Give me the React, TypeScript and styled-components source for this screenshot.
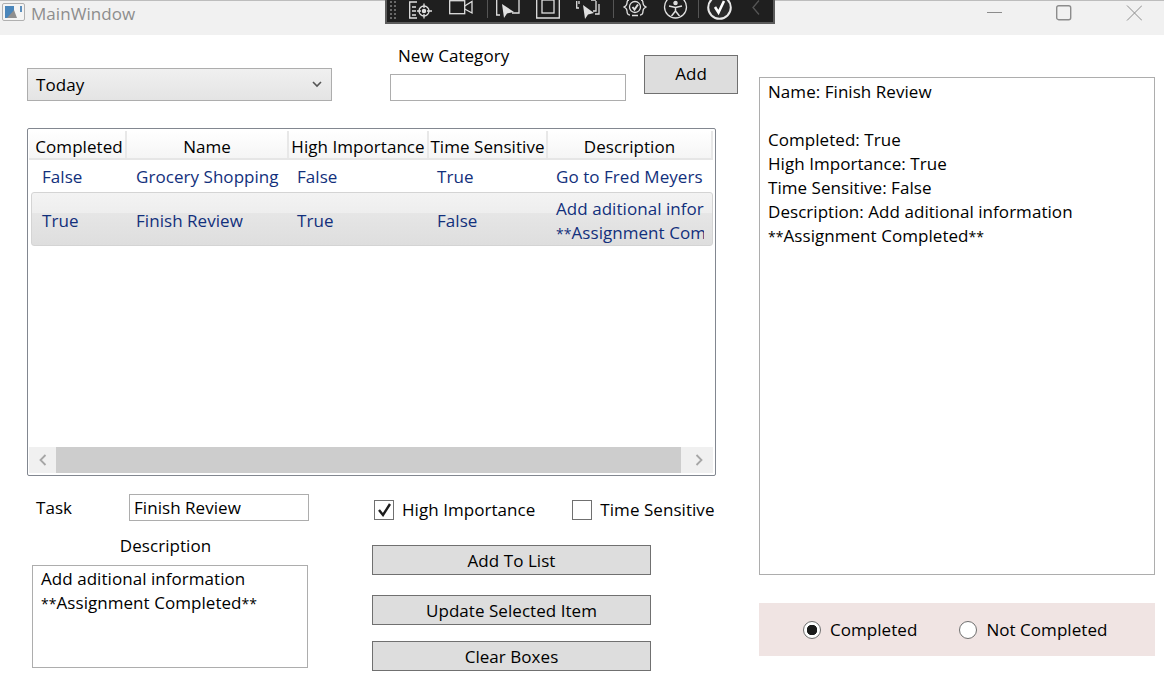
import styled, { createGlobalStyle } from 'styled-components'

const GlobalStyle = createGlobalStyle`
  html, body {
    margin: 0;
    padding: 0;
    background: #ffffff;
  }
  body {
    font-family: "Open Sans", "Noto Sans", "Liberation Sans", sans-serif;
    font-size: 17px;
    letter-spacing: 0.05px;
    color: #000000;
  }
`

const columns = [
  { title: 'Completed', width: 94 },
  { title: 'Name', width: 162 },
  { title: 'High Importance', width: 140 },
  { title: 'Time Sensitive', width: 119 },
  { title: 'Description', width: 165 },
]

const rows = [
  { completed: 'False', name: 'Grocery Shopping', high: 'False', time: 'True', description: ['Go to Fred Meyers'], selected: false },
  { completed: 'True', name: 'Finish Review', high: 'True', time: 'False', description: ['Add aditional information', 'done'], selected: true },
]

// the asterisks are wider in Open Sans than in the original font
const Done = () => (
  <>
    <Stars>**</Stars>Assignment Completed<Stars>**</Stars>
  </>
)

const App = () => {
  return (
    <Window>
      <GlobalStyle />
      <TitleBar>
        <AppIcon viewBox="0 0 23 18">
          <rect x="0.5" y="0.5" width="22" height="17" rx="1.5" fill="#f4f4f4" stroke="#b0b0b0" />
          <rect x="3" y="3" width="9" height="12" fill="#4a86bb" />
          <path d="M5 15 L12 7 L15 15 Z" fill="#8f8f8f" />
          <rect x="18" y="3" width="2" height="6" fill="#5c8fbd" />
        </AppIcon>
        <WindowTitle>MainWindow</WindowTitle>
        <DebugBar>
          <Grip />
          <ToolIcon $left={12} width="24" height="20" viewBox="0 0 24 20">
            <path d="M8 2 H0.7 V18 H8 M3 7 H7 M3 11 H7 M3 15 H7" />
            <circle cx="15" cy="11" r="5" />
            <circle cx="15" cy="11" r="1.6" fill="#e0e0e0" />
            <path d="M15 3.5 V8 M15 14 V18.5 M8 11 H12 M18 11 H23" />
          </ToolIcon>
          <ToolIcon $left={16} width="24" height="20" viewBox="0 0 24 20">
            <rect x="0.7" y="0.7" width="15" height="13" />
            <path d="M15.7 6 L23 1.5 V13 L15.7 9" />
          </ToolIcon>
          <Divider $left={14} />
          <ToolIcon $left={9} width="24" height="20" viewBox="0 0 24 20">
            <path d="M0.7 0 V15 H4 M23 0 V13 H16" />
            <path d="M6 4 L8 18 L11 13.5 L18 12 Z" fill="#e0e0e0" stroke="none" />
          </ToolIcon>
          <ToolIcon $left={16} width="24" height="20" viewBox="0 0 24 20">
            <path d="M0.7 0 V18 H23.3 V0" />
            <rect x="6" y="0" width="12" height="13" />
          </ToolIcon>
          <ToolIcon $left={16} width="24" height="20" viewBox="0 0 24 20">
            <path d="M0.7 1 V8 H3 M3 1 V4 M23 4 V14 H19 M20 1 V11 H17 M15 0 H20" />
            <path d="M7 5 L9 19 L12 14.5 L18 13 Z" fill="#e0e0e0" stroke="none" />
          </ToolIcon>
          <Divider $left={13} />
          <ToolIcon $left={10} width="24" height="20" viewBox="0 0 24 20">
            <path d="M6 0 C4.5 0 4 1.5 4 3 C4 5 3 6 1 7 C3 8 4 9 4 11 C4 14 5 15 7 15 M18 0 C19.5 0 20 1.5 20 3 C20 5 21 6 23 7 C21 8 20 9 20 11 C20 14 19 15 17 15 M9 15.5 H15" />
            <circle cx="12" cy="7" r="5.5" />
            <path d="M9.5 7 L11.5 9.5 L15 4.5" strokeWidth="2" />
          </ToolIcon>
          <ToolIcon $left={16} width="25" height="20" viewBox="0 0 25 20">
            <circle cx="12.5" cy="7" r="11" />
            <circle cx="12.5" cy="3" r="1.6" fill="#e0e0e0" />
            <path d="M6 6 L12.5 7.5 L19 6 M12.5 7.5 V11 L8.5 16 M12.5 11 L16.5 16" strokeWidth="1.5" />
          </ToolIcon>
          <Divider $left={10} />
          <ToolIcon $left={9} width="25" height="20" viewBox="0 0 25 20">
            <circle cx="12.5" cy="7.5" r="11.3" fill="#2a2a2a" stroke="#e8e8e8" strokeWidth="2" />
            <path d="M8 7 L11.5 12.5 L17 1" stroke="#ffffff" strokeWidth="2.6" />
          </ToolIcon>
          <ToolIcon $left={20} width="8" height="20" viewBox="0 0 8 20" $dim>
            <path d="M7 0.5 L1 7.5 L7 14.5" />
          </ToolIcon>
        </DebugBar>
        <WindowControls>
          <svg width="16" height="16" viewBox="0 0 16 16" fill="none" stroke="#8c8c8c" strokeWidth="1">
            <path d="M1 7.5 H16" />
          </svg>
          <svg width="16" height="16" viewBox="0 0 16 16" fill="none" stroke="#8c8c8c" strokeWidth="1.4">
            <rect x="0.7" y="0.7" width="14" height="14" rx="2" />
          </svg>
          <svg width="16" height="16" viewBox="0 0 16 16" fill="none" stroke="#8c8c8c" strokeWidth="1">
            <path d="M1 0.5 L16 15.5 M16 0.5 L1 15.5" />
          </svg>
        </WindowControls>
      </TitleBar>

      <Content>
        <LeftColumn>
          <TopRow>
            <ComboBox>
              <span>Today</span>
              <svg width="10" height="7" viewBox="0 0 10 7" fill="none" stroke="#555555" strokeWidth="1.6">
                <path d="M1 1 L5 5 L9 1" />
              </svg>
            </ComboBox>
            <CategoryField>
              <CategoryLabel>New Category</CategoryLabel>
              <CategoryInput />
            </CategoryField>
            <AddButton>Add</AddButton>
          </TopRow>

          <GridBox>
            <GridHeader>
              {columns.map((column) => (
                <HeaderCell key={column.title} $width={column.width}>{column.title}</HeaderCell>
              ))}
            </GridHeader>
            <GridBody>
              {rows.map((row) => (
                <GridRow key={row.name} $selected={row.selected}>
                  <Cell $width={columns[0].width + 1}>{row.completed}</Cell>
                  <Cell $width={columns[1].width}>{row.name}</Cell>
                  <Cell $width={columns[2].width}>{row.high}</Cell>
                  <Cell $width={columns[3].width}>{row.time}</Cell>
                  <Cell $width={columns[4].width}>
                    {row.description.map((line) => (
                      <div key={line}>{line === 'done' ? <Done /> : line}</div>
                    ))}
                  </Cell>
                </GridRow>
              ))}
            </GridBody>
            <ScrollBar>
              <ScrollButton $wide={false}>
                <svg width="10" height="12" viewBox="0 0 10 12" fill="none" stroke="#a6a6a6" strokeWidth="1.8">
                  <path d="M7.5 1 L2.5 6 L7.5 11" />
                </svg>
              </ScrollButton>
              <ScrollButton $wide>
                <svg width="10" height="12" viewBox="0 0 10 12" fill="none" stroke="#a6a6a6" strokeWidth="1.8">
                  <path d="M2.5 1 L7.5 6 L2.5 11" />
                </svg>
              </ScrollButton>
            </ScrollBar>
          </GridBox>

          <BottomRow>
            <EditorColumn>
              <TaskRow>
                <TaskLabel>Task</TaskLabel>
                <TaskBox>Finish Review</TaskBox>
              </TaskRow>
              <DescriptionLabel>Description</DescriptionLabel>
              <DescriptionBox>
                Add aditional information
                <br />
                <Done />
              </DescriptionBox>
            </EditorColumn>
            <ActionColumn>
              <CheckRow>
                <CheckItem>
                  <CheckBox>
                    <svg width="15" height="14" viewBox="0 0 15 14" fill="none" stroke="#1c1c1c" strokeWidth="2.4">
                      <path d="M2 7 L6 12 L13 1" />
                    </svg>
                  </CheckBox>
                  High Importance
                </CheckItem>
                <CheckItem>
                  <CheckBox />
                  Time Sensitive
                </CheckItem>
              </CheckRow>
              <ActionButton $top={20}>Add To List</ActionButton>
              <ActionButton $top={20}>Update Selected Item</ActionButton>
              <ActionButton $top={16}>Clear Boxes</ActionButton>
            </ActionColumn>
          </BottomRow>
        </LeftColumn>

        <RightColumn>
          <SummaryBox>
            <div>Name: Finish Review</div>
            <br />
            <div>Completed: True</div>
            <div>High Importance: True</div>
            <div>Time Sensitive: False</div>
            <div>Description: Add aditional information</div>
            <div><Done /></div>
          </SummaryBox>
          <RadioPanel>
            <RadioItem>
              <Radio $checked />
              Completed
            </RadioItem>
            <RadioItem>
              <Radio />
              Not Completed
            </RadioItem>
          </RadioPanel>
        </RightColumn>
      </Content>
    </Window>
  )
}

const Window = styled.div`
  width: 1164px;
  height: 678px;
  overflow: hidden;
  position: relative;
  background: #ffffff;
`

const TitleBar = styled.div`
  height: 34px;
  display: flex;
  align-items: flex-start;
  background: #f1f1f1;
  border-top: 1px solid #bdbdbd;
  box-sizing: content-box;
`

const AppIcon = styled.svg`
  width: 23px;
  height: 18px;
  margin: 2px 0 0 2px;
`

const WindowTitle = styled.div`
  margin: 1px 0 0 6px;
  font-size: 17px;
  line-height: 24px;
  color: #8d8d8d;
`

const DebugBar = styled.div`
  position: absolute;
  top: 0;
  left: 385px;
  width: 390px;
  height: 24px;
  box-sizing: border-box;
  display: flex;
  align-items: flex-start;
  background: #1f1f1f;
  border: 2px solid #5b5b5b;
  border-top: none;
  overflow: hidden;
`

const Grip = styled.div`
  width: 8px;
  height: 20px;
  margin-left: 2px;
  background-image: radial-gradient(#6e6e6e 0.7px, transparent 0.8px);
  background-size: 4px 4px;
`

const ToolIcon = styled.svg<{ $left: number; $dim?: boolean }>`
  flex: none;
  margin-left: ${(p) => p.$left}px;
  fill: none;
  stroke: ${(p) => (p.$dim ? '#555555' : '#e0e0e0')};
  stroke-width: 1.3;
`

const Divider = styled.div<{ $left: number }>`
  width: 1px;
  height: 18px;
  margin-left: ${(p) => p.$left}px;
  margin-right: -1px;
  background: #555555;
`

const WindowControls = styled.div`
  position: absolute;
  top: 5px;
  right: 22px;
  display: flex;
  gap: 54px;
`

const Content = styled.div`
  display: flex;
  padding-left: 27px;
`

const LeftColumn = styled.div`
  width: 711px;
`

const TopRow = styled.div`
  height: 93px;
  display: flex;
  align-items: flex-start;
`

const ComboBox = styled.div`
  width: 305px;
  height: 33px;
  margin-top: 33px;
  box-sizing: border-box;
  display: flex;
  align-items: center;
  justify-content: space-between;
  padding: 0 9px 0 8px;
  border: 1px solid #adadad;
  background: linear-gradient(#f0f0f0, #e4e4e4);
`

const CategoryField = styled.div`
  width: 236px;
  margin: 9px 0 0 58px;
`

const CategoryLabel = styled.div`
  line-height: 24px;
  padding-left: 8px;
  margin-bottom: 6px;
`

const CategoryInput = styled.div`
  height: 27px;
  box-sizing: border-box;
  border: 1px solid #adadad;
  background: #ffffff;
`

const AddButton = styled.div`
  width: 94px;
  height: 39px;
  margin: 20px 0 0 18px;
  padding-bottom: 2px;
  box-sizing: border-box;
  display: flex;
  align-items: center;
  justify-content: center;
  background: #dddddd;
  border: 1px solid #707070;
`

const GridBox = styled.div`
  width: 689px;
  height: 348px;
  box-sizing: border-box;
  display: flex;
  flex-direction: column;
  border: 1px solid #828790;
  border-radius: 2px;
  background: #ffffff;
  padding: 2px 2px 2px 1px;
`

const GridHeader = styled.div`
  display: flex;
  height: 29px;
  padding-left: 4px;
  background: linear-gradient(#ffffff, #f5f5f5);
  border-bottom: 2px solid #e6e6e6;
  box-sizing: border-box;
`

const HeaderCell = styled.div<{ $width: number }>`
  width: ${(p) => p.$width}px;
  flex: none;
  box-sizing: border-box;
  border-right: 2px solid #e8e8e8;
  text-align: center;
  white-space: nowrap;
  line-height: 31px;
`

const GridBody = styled.div`
  flex: 1;
  overflow: hidden;
`

const GridRow = styled.div<{ $selected: boolean }>`
  display: flex;
  align-items: center;
  box-sizing: border-box;
  height: ${(p) => (p.$selected ? 54 : 32)}px;
  color: #12307c;
  margin-left: ${(p) => (p.$selected ? 2 : 0)}px;
  padding-left: ${(p) => (p.$selected ? 0 : 3)}px;
  padding-top: ${(p) => (p.$selected ? 4 : 2)}px;
  border: ${(p) => (p.$selected ? '1px solid #d4d4d4' : 'none')};
  border-radius: 3px;
  background: ${(p) =>
    p.$selected
      ? 'linear-gradient(#f3f3f3 0%, #eeeeee 38%, #e6e6e6 38%, #dedede 100%)'
      : 'transparent'};
`

const Cell = styled.div<{ $width: number }>`
  width: ${(p) => p.$width}px;
  flex: none;
  box-sizing: border-box;
  padding-left: 8px;
  overflow: hidden;
  white-space: nowrap;
  line-height: 24px;
  &:first-child {
    padding-left: 10px;
  }
  &:nth-child(2) {
    padding-left: 9px;
  }
  &:last-child {
    width: 156px;
  }
`

const Stars = styled.span`
  font-size: 14px;
`

const ScrollBar = styled.div`
  height: 26px;
  flex: none;
  display: flex;
  justify-content: space-between;
  background: #cdcdcd;
`

const ScrollButton = styled.div<{ $wide: boolean }>`
  width: 27px;
  display: flex;
  align-items: center;
  justify-content: center;
  background: #f0f0f0;
  ${(p) => (p.$wide ? 'width: 32px; padding-left: 4px; box-sizing: border-box;' : '')}
`

const BottomRow = styled.div`
  display: flex;
  margin-top: 18px;
`

const EditorColumn = styled.div`
  width: 281px;
  margin-left: 5px;
`

const TaskRow = styled.div`
  display: flex;
  align-items: center;
  height: 27px;
  padding-left: 4px;
`

const TaskLabel = styled.div`
  width: 93px;
`

const TaskBox = styled.div`
  width: 180px;
  height: 27px;
  box-sizing: border-box;
  padding-left: 4px;
  line-height: 26px;
  border: 1px solid #adadad;
`

const DescriptionLabel = styled.div`
  line-height: 24px;
  margin-top: 13px;
  padding-right: 14px;
  text-align: center;
`

const DescriptionBox = styled.div`
  width: 276px;
  height: 103px;
  margin-top: 7px;
  box-sizing: border-box;
  padding: 1px 8px;
  line-height: 24px;
  border: 1px solid #adadad;
`

const ActionColumn = styled.div`
  margin-left: 59px;
  display: flex;
  flex-direction: column;
  align-items: flex-start;
`

const CheckRow = styled.div`
  display: flex;
  gap: 37px;
  height: 31px;
  align-items: center;
  padding-left: 2px;
  white-space: nowrap;
`

const CheckItem = styled.div`
  display: flex;
  align-items: center;
  gap: 8px;
`

const CheckBox = styled.div`
  width: 20px;
  height: 20px;
  box-sizing: border-box;
  display: flex;
  align-items: center;
  justify-content: center;
  border: 1px solid #707070;
  background: #ffffff;
`

const ActionButton = styled.div<{ $top: number }>`
  width: 279px;
  height: 30px;
  margin-top: ${(p) => p.$top}px;
  box-sizing: border-box;
  display: flex;
  align-items: center;
  justify-content: center;
  background: #dddddd;
  border: 1px solid #707070;
`

const RightColumn = styled.div`
  width: 396px;
  margin: 42px 0 0 21px;
`

const SummaryBox = styled.div`
  height: 498px;
  box-sizing: border-box;
  padding: 2px 8px;
  line-height: 24px;
  border: 1px solid #adadad;
`

const RadioPanel = styled.div`
  height: 53px;
  margin-top: 28px;
  display: flex;
  align-items: center;
  gap: 42px;
  padding-left: 44px;
  background: #f0e4e3;
`

const RadioItem = styled.div`
  display: flex;
  align-items: center;
  gap: 9px;
`

const Radio = styled.div<{ $checked?: boolean }>`
  width: 18px;
  height: 18px;
  box-sizing: border-box;
  border-radius: 50%;
  border: 1px solid #6f6f6f;
  background: ${(p) =>
    p.$checked
      ? 'radial-gradient(circle, #1c1c1c 0 5px, #ffffff 5.5px)'
      : '#ffffff'};
`

export default App
